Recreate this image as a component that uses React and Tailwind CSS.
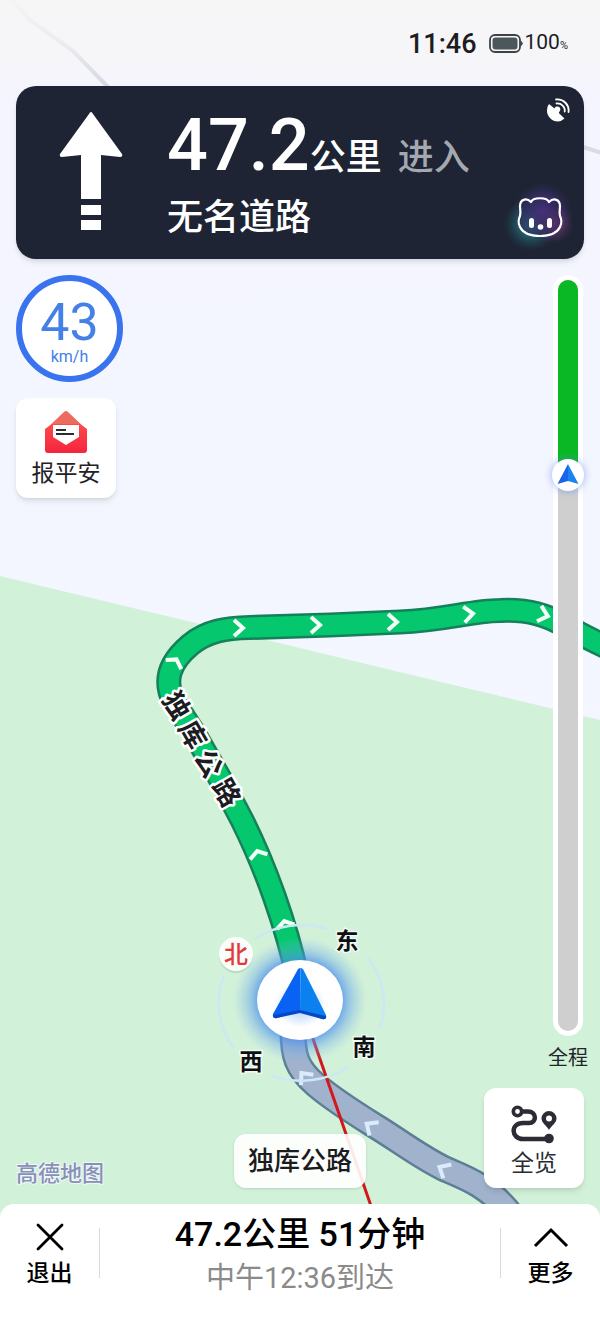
// src/App.jsx
// Driving navigation screen: map backdrop, turn card, trip progress and bottom bar.

const FONT = "font-['Roboto','Noto_Sans_CJK_SC',sans-serif]";

// Direction chevrons painted on the route: position, heading in degrees,
// flat for the ones that the camera tilt foreshortens
const ROUTE_CHEVRONS = [
  { x: 285, y: 924, angle: -104, flat: true },
  { x: 258, y: 854, angle: -106, flat: true },
  { x: 175, y: 662, angle: -60, flat: true },
  { x: 239, y: 628, angle: 0 },
  { x: 316, y: 625, angle: 0 },
  { x: 393, y: 622, angle: 0 },
  { x: 469, y: 614, angle: -6 },
  { x: 544, y: 615, angle: 16 }
];

const PASSED_CHEVRONS = [
  { x: 304, y: 1076, angle: -130 },
  { x: 370, y: 1126, angle: -145 },
  { x: 443, y: 1169, angle: -150 }
];

// Road name letters placed along the route
const ROAD_LETTERS = [
  { char: "独", x: 176, y: 706 },
  { char: "库", x: 192, y: 735 },
  { char: "公", x: 208, y: 764 },
  { char: "路", x: 226, y: 793 }
];

const COMPASS_LETTERS = [
  { char: "东", x: 347, y: 941 },
  { char: "南", x: 364, y: 1047 },
  { char: "西", x: 251, y: 1062 }
];

function Chevrons({ items, color }) {
  return items.map(({ x, y, angle, flat }) => (
    <polyline
      key={`${x}-${y}`}
      points={flat ? "-3,-9 3,0 -3,9" : "-5,-8 4,0 -5,8"}
      transform={`translate(${x} ${y}) rotate(${angle})`}
      fill="none"
      stroke={color}
      strokeWidth="4"
    />
  ));
}

function MapBackdrop() {
  const route =
    "M297 975 C286 925 266 868 242 820 L222 782 L194 733 L174 702 C163 680 170 662 190 645 C207 631 226 628 250 627.500 L330 625 L400 622 C445 620 470 611 500 610.500 C530 609 548 616 564 625 C578 633 588 639 620 653";
  const passed =
    "M293 1030 C293 1055 296 1068 316 1085 C330 1097 345 1107 372 1124 C400 1141 420 1157 445 1169 C466 1178 488 1186 509 1212";

  return (
    <svg
      viewBox="0 0 600 1320"
      preserveAspectRatio="xMidYMin slice"
      className="absolute inset-0 h-full w-full"
      aria-hidden="true"
    >
      <defs>
        <linearGradient id="sky" x1="0" y1="0" x2="0" y2="1">
          <stop offset="0" stopColor="#f6f6f7" />
          <stop offset="0.045" stopColor="#f6f6f9" />
          <stop offset="0.075" stopColor="#f4f5ff" />
          <stop offset="1" stopColor="#f4f8ff" />
        </linearGradient>
        <linearGradient id="fadeLine" x1="0" y1="0" x2="0" y2="1">
          <stop offset="0" stopColor="#f4f4f6" />
          <stop offset="0.5" stopColor="#ececf0" />
          <stop offset="1" stopColor="#d6d7e2" />
        </linearGradient>
        <radialGradient id="halo">
          <stop offset="0.55" stopColor="#3b86ee" stopOpacity="0.9" />
          <stop offset="0.75" stopColor="#5c9cec" stopOpacity="0.45" />
          <stop offset="1" stopColor="#8cc0ee" stopOpacity="0" />
        </radialGradient>
        <radialGradient id="puck">
          <stop offset="0.3" stopColor="#c5dcff" />
          <stop offset="0.8" stopColor="#ffffff" />
        </radialGradient>
      </defs>

      {/* Land */}
      <rect width="600" height="1320" fill="url(#sky)" />
      <path d="M0 576 L600 720 V1320 H0 Z" fill="#d2f1d9" />
      <path d="M12 0 L30 20 L72 50 L108 87" fill="none" stroke="url(#fadeLine)" strokeWidth="4" />
      <path d="M580 146 L602 153" stroke="#d9dce6" strokeWidth="4" />

      {/* Part of the road that was already driven */}
      <path d={passed} fill="none" stroke="#5c7f96" strokeWidth="27" />
      <path d={passed} fill="none" stroke="#a0b2cc" strokeWidth="22" />
      <Chevrons items={PASSED_CHEVRONS} color="#dcebfb" />

      {/* Route ahead */}
      <path d={route} fill="none" stroke="#15805a" strokeWidth="25" />
      <path d={route} fill="none" stroke="#05c76d" strokeWidth="20" />
      <Chevrons items={ROUTE_CHEVRONS} color="#f4fff8" />

      {/* Bearing line to the destination */}
      <path d="M312 1036 L371 1206" stroke="#d3171c" strokeWidth="3" />

      {ROAD_LETTERS.map(({ char, x, y }) => (
        <text
          key={char}
          transform={`translate(${x} ${y}) rotate(60)`}
          textAnchor="middle"
          dominantBaseline="central"
          fontSize="27"
          fontWeight="700"
          fill="#1b1b22"
          stroke="#ffffff"
          strokeWidth="5"
          strokeLinejoin="round"
          paintOrder="stroke"
        >
          {char}
        </text>
      ))}

      {/* Compass ring */}
      <g fill="none" stroke="#cde7f5" strokeWidth="2.500" strokeLinecap="round">
        <path d="M256 938 A82 77 0 0 1 327 929" />
        <path d="M368 958 A82 77 0 0 1 380 1028" />
        <path d="M273 1076 A82 77 0 0 0 348 1067" />
        <path d="M224 976 A82 77 0 0 0 233 1047" />
      </g>
      <ellipse cx="300" cy="1000" rx="67" ry="63" fill="url(#halo)" />
      <ellipse cx="300" cy="1000" rx="43" ry="40" fill="#ffffff" />
      <ellipse cx="300" cy="1005" rx="32" ry="28" fill="url(#puck)" />
      <path d="M300.500 968 Q298 968 297 971 L273 1014 Q272 1019 277 1018 L300 1011 Z" fill="#0a62f5" />
      <path d="M300.500 968 Q303 968 304 971 L326 1015 Q327 1020 322 1019 L300 1011 Z" fill="#0b80ef" />
      <path d="M273 1015 L300 1010 L326 1016 Q327 1020 322 1019 L300 1013 L277 1018 Q273 1019 273 1015 Z" fill="#0647c4" />

      <circle cx="236" cy="956" r="17" fill="#9fc5b0" fillOpacity="0.5" />
      <circle cx="236" cy="954" r="17" fill="#fbfdfb" />
      <text x="236" y="955" textAnchor="middle" dominantBaseline="central" fontSize="24" fontWeight="500" fill="#e03a3a">
        北
      </text>
      {COMPASS_LETTERS.map(({ char, x, y }) => (
        <text
          key={char}
          x={x}
          y={y}
          textAnchor="middle"
          dominantBaseline="central"
          fontSize="23"
          fontWeight="700"
          fill="#101014"
          stroke="#eefaf1"
          strokeWidth="3"
          paintOrder="stroke"
        >
          {char}
        </text>
      ))}
    </svg>
  );
}

function StatusBar() {
  return (
    <div className="flex h-[86px] items-center justify-end px-8 pt-0.5 text-[#1d1d1f]">
      <span className="text-[27px] leading-[34px] font-medium">11:46</span>
      <svg viewBox="0 0 34 20" className="ml-3 h-5 w-[34px]" aria-hidden="true">
        <rect x="1" y="1" width="30" height="17" rx="5" fill="none" stroke="#3c4245" strokeWidth="1.800" />
        <rect x="3.500" y="3.500" width="25" height="12" rx="3" fill="#4b575b" />
        <path d="M31.500 6 L34 9.500 L31.500 13 Z" fill="#3c4245" />
      </svg>
      <span className="ml-0.5 text-[21px] leading-[34px]">
        100<span className="text-[11px]">%</span>
      </span>
    </div>
  );
}

function StraightArrow() {
  return (
    <svg viewBox="0 0 64 120" className="h-[120px] w-16 shrink-0" aria-label="直行">
      <g fill="#ffffff">
        <path d="M32 0 Q33 0 34 2 L63 42 Q64 45 61 45 L42 43 V87 H22 V43 L3 45 Q0 45 1 42 L30 2 Q31 0 32 0 Z" />
        <rect x="22" y="93" width="20" height="10" />
        <rect x="22" y="108" width="20" height="10" />
      </g>
    </svg>
  );
}

function SatelliteIcon() {
  return (
    <svg viewBox="0 0 24 24" className="h-6 w-6" aria-hidden="true">
      <path
        d="M3 6 L8.500 10.500 A3 3 0 1 1 13.500 13.500 L12.800 15 L18.500 20.500 A11 11 0 0 1 12 23.500 A11 11 0 0 1 1 12.500 A10 10 0 0 1 3 6 Z"
        fill="#ffffff"
      />
      <g fill="none" stroke="#ffffff" strokeWidth="1.800" strokeLinecap="round">
        <path d="M10 1.500 C17.500 0.500 23.500 7 22.500 14" />
        <path d="M10.500 5.500 C15.500 5 19.300 9 18.700 13.500" />
      </g>
    </svg>
  );
}

function AssistantIcon() {
  return (
    <svg viewBox="0 0 84 84" className="h-[84px] w-[84px]" aria-hidden="true">
      <defs>
        <radialGradient id="glowTeal">
          <stop offset="0" stopColor="#2fb8b8" stopOpacity="0.9" />
          <stop offset="1" stopColor="#1e6470" stopOpacity="0" />
        </radialGradient>
        <radialGradient id="glowPurple">
          <stop offset="0" stopColor="#6a40b8" stopOpacity="1" />
          <stop offset="1" stopColor="#3a2f78" stopOpacity="0" />
        </radialGradient>
        <radialGradient id="glowPink">
          <stop offset="0" stopColor="#a8478f" stopOpacity="0.8" />
          <stop offset="1" stopColor="#5c3070" stopOpacity="0" />
        </radialGradient>
      </defs>
      <circle cx="33" cy="49" r="27" fill="url(#glowTeal)" />
      <circle cx="45" cy="37" r="30" fill="url(#glowPurple)" />
      <circle cx="56" cy="49" r="20" fill="url(#glowPink)" />
      <path
        d="M33 27 C35 22 49 22 51 27 C56 22 62 25 62 31 C62 34 61 37 62 41 C64 45 64 48 62 52 C59 58 51 61 42 61 C33 61 25 58 22 52 C20 48 20 45 22 41 C23 37 22 34 22 31 C22 25 28 22 33 27 Z"
        fill="#2a2450"
        fillOpacity="0.55"
        stroke="#ffffff"
        strokeWidth="2.200"
        strokeLinejoin="round"
      />
      <rect x="31" y="43" width="5" height="10" rx="2.500" fill="#ffffff" />
      <rect x="49" y="43" width="5" height="10" rx="2.500" fill="#ffffff" />
      <circle cx="42.500" cy="52" r="2.800" fill="#ffffff" />
    </svg>
  );
}

function TurnCard() {
  return (
    <section className="mx-4 flex h-[173px] rounded-[20px] bg-[#1e2433] text-white shadow-md">
      <div className="pt-6.5 pl-[43px]">
        <StraightArrow />
      </div>
      <div className="ml-11 flex-1 pt-5">
        <div className="flex items-baseline whitespace-nowrap">
          <span className="text-[72px] leading-20 font-medium">47.2</span>
          <span className="text-4xl font-medium">公里</span>
          <span className="ml-4 text-4xl font-medium text-[#a4a8b0]">进入</span>
        </div>
        <div className="mt-2 text-4xl leading-12 font-medium">无名道路</div>
      </div>
      <div className="flex flex-col items-end justify-between pt-3">
        <span className="mr-3.5">
          <SatelliteIcon />
        </span>
        <button type="button" aria-label="语音助手" className="mr-0.5 block">
          <AssistantIcon />
        </button>
      </div>
    </section>
  );
}

function SpeedDial({ speed }) {
  return (
    <div className="flex h-[107px] w-[107px] flex-col items-center rounded-full border-[6px] border-[#3a73ee] bg-white pt-4 text-[#4480e6]">
      <span className="text-[52px] leading-13">{speed}</span>
      <span className="text-base leading-4">km/h</span>
    </div>
  );
}

function SafetyButton() {
  return (
    <button
      type="button"
      className="mt-4 flex h-[100px] w-[100px] flex-col items-center rounded-xl bg-white pt-3 text-[#222226] shadow-md"
    >
      <svg viewBox="0 0 44 44" className="h-11 w-11" aria-hidden="true">
        <defs>
          <linearGradient id="envelope" x1="0" y1="0" x2="0" y2="1">
            <stop offset="0" stopColor="#ff4a4a" />
            <stop offset="1" stopColor="#f42440" />
          </linearGradient>
        </defs>
        <path d="M22 1 Q23 1 24 2 L43 20 H1 L20 2 Q21 1 22 1 Z" fill="#ec6a5e" />
        <path d="M1 19 L8 14 H36 L43 19 V40 Q43 43 40 43 H4 Q1 43 1 40 Z" fill="url(#envelope)" />
        <path d="M9 15 H35 V27 L22 35 L9 27 Z" fill="#ffffff" />
        <path d="M12 20 H22 M12 24 H30" stroke="#2b2b30" strokeWidth="2" />
      </svg>
      <span className="text-[23px] leading-10">报平安</span>
    </button>
  );
}

function TripProgress({ percent }) {
  return (
    <div className="mr-3 flex flex-1 flex-col items-center">
      <div
        role="progressbar"
        aria-label="全程"
        aria-valuenow={percent}
        className="flex w-[30px] flex-1 rounded-full bg-white p-[5px]"
      >
        <div className="relative flex-1 rounded-full bg-[#cfcfcf]">
          <div className="rounded-t-full bg-[#09b824]" style={{ height: `${percent}%` }} />
          <span
            className="absolute left-1/2 flex h-8 w-8 -translate-x-1/2 -translate-y-1/2 items-center justify-center rounded-full bg-white shadow-[0_0_8px_rgba(90,130,240,0.6)]"
            style={{ top: `${percent}%` }}
          >
            <svg viewBox="0 0 22 22" className="h-[22px] w-[22px]" aria-hidden="true">
              <path d="M11 0 L0.500 20 L11 17 Z" fill="#1a63ea" />
              <path d="M11 0 L21.500 20 L11 17 Z" fill="#1a85f0" />
            </svg>
          </span>
        </div>
      </div>
      <span className="mt-1.5 text-xl leading-8 text-[#222629]">全程</span>
    </div>
  );
}

function OverviewButton() {
  return (
    <button
      type="button"
      className="mt-3.5 mr-4 flex h-[100px] w-[100px] flex-col items-center rounded-xl bg-white pt-4 text-[#2a2c33] shadow-md"
    >
      <svg viewBox="0 0 48 40" className="h-10 w-12" aria-hidden="true">
        <g fill="none" stroke="#2b2c36" strokeWidth="4.500" strokeLinecap="round">
          <circle cx="7.500" cy="7.500" r="4.200" strokeWidth="3.600" />
          <path d="M13 7.500 H18 C27 7.500 27 19 19 19 H13 C0 19 1 35 13 35 H39" />
        </g>
        <circle cx="39" cy="34.500" r="4.800" fill="#2b2c36" />
        <path
          fillRule="evenodd"
          d="M39 7 A7.500 7.500 0 0 1 46.500 14.500 C46.500 19 41 22 39 26 C37 22 31.500 19 31.500 14.500 A7.500 7.500 0 0 1 39 7 Z M39 11.500 A3 3 0 1 0 39 17.500 A3 3 0 1 0 39 11.500 Z"
          fill="#2b2c36"
        />
      </svg>
      <span className="text-[23px] leading-10">全览</span>
    </button>
  );
}

function BottomBar() {
  return (
    <footer className="flex h-[116px] rounded-t-[14px] bg-white pt-3 text-black">
      <button type="button" className="flex w-[99px] flex-col items-center pt-1.5">
        <svg viewBox="0 0 30 30" className="h-[30px] w-[30px]" aria-hidden="true">
          <path d="M3 3 L27 27 M27 3 L3 27" stroke="#000000" strokeWidth="2.800" strokeLinecap="round" />
        </svg>
        <span className="text-[23px] leading-11 font-medium">退出</span>
      </button>
      <div className="mt-3 h-[50px] w-px bg-[#d9d9d9]" />
      <div className="flex-1 text-center whitespace-nowrap">
        <div className="text-[34px] leading-9 font-medium">47.2公里 51分钟</div>
        <div className="mt-1 text-[29px] leading-11 text-[#8a8a8a]">中午12:36到达</div>
      </div>
      <div className="mt-3 h-[50px] w-px bg-[#d9d9d9]" />
      <button type="button" className="flex w-[99px] flex-col items-center pt-1.5">
        <svg viewBox="0 0 36 30" className="h-[30px] w-9" aria-hidden="true">
          <path d="M2 24 L18 8 L34 24" fill="none" stroke="#000000" strokeWidth="3" />
        </svg>
        <span className="text-[23px] leading-11 font-medium">更多</span>
      </button>
    </footer>
  );
}

export default function App() {
  return (
    <div className={`relative flex min-h-screen flex-col overflow-hidden bg-[#f4f7ff] ${FONT}`}>
      <MapBackdrop />
      <div className="relative flex flex-1 flex-col">
        <StatusBar />
        <TurnCard />
        <main className="grid flex-1 grid-cols-[1fr_auto_1fr] pt-4 pb-4">
          <div className="flex flex-col items-start pl-4">
            <SpeedDial speed={43} />
            <SafetyButton />
            <span className="mt-auto text-[22px] leading-7 font-medium text-[#8790b8] [paint-order:stroke] [-webkit-text-stroke:2px_#f0f8f6]">
              高德地图
            </span>
          </div>
          <div className="flex items-end">
            <div className="rounded-xl bg-white/90 px-3.5 text-[26px] leading-[54px] font-medium text-[#1c1c1f] shadow-sm">
              独库公路
            </div>
          </div>
          <div className="flex flex-col items-end">
            <TripProgress percent={26} />
            <OverviewButton />
          </div>
        </main>
        <BottomBar />
      </div>
    </div>
  );
}
